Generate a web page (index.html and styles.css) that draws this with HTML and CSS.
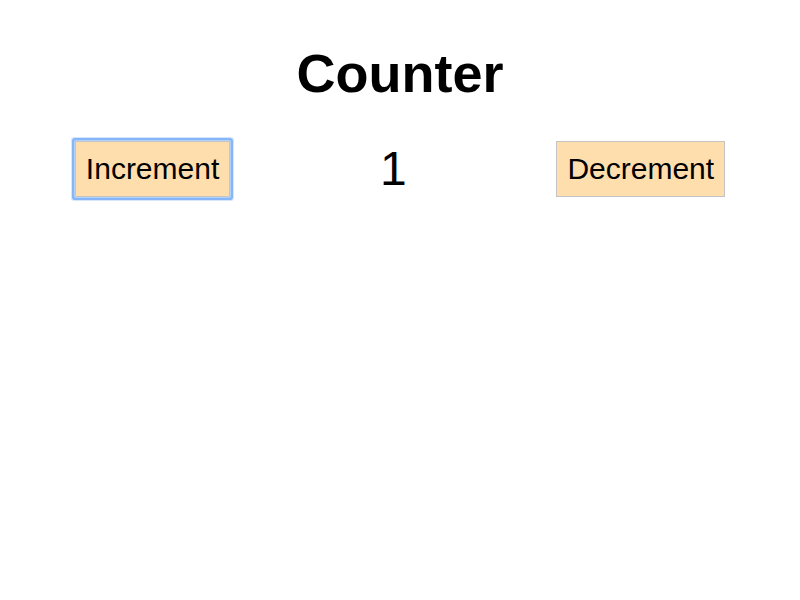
FILE: index.html
```html
<!DOCTYPE html>
<html>
<head>
<meta charset="utf-8">
<link rel="stylesheet" href="styles.css">
</head>
<body>
<div class="app">
  <h1 class="title">Counter</h1>
  <div class="row">
    <button class="btn focused">Increment</button>
    <span class="count">1</span>
    <button class="btn">Decrement</button>
  </div>
</div>
</body>
</html>
```
FILE: styles.css
```css
html, body {
  margin: 0;
  padding: 0;
  background: #ffffff;
}
body {
  font-family: "Liberation Sans", Arial, sans-serif;
  color: #000;
}
.app {
  width: 800px;
  height: 600px;
}
.title {
  margin: 0;
  padding-top: 42px;
  font-size: 54px;
  line-height: 62px;
  font-weight: bold;
  text-align: center;
}
.row {
  display: flex;
  justify-content: space-around;
  align-items: center;
  margin-top: 37px;
}
.btn {
  font-family: "Liberation Sans", Arial, sans-serif;
  font-size: 30px;
  line-height: 34px;
  padding: 10px 10px;
  background: #ffdead;
  border: 1px solid #c4c4c4;
  border-radius: 0;
  color: #000;
}
.btn.focused {
  box-shadow: 0 0 0 1px #b2d2fb, 0 0 0 3px #86b6f8, 0 0 0 4px rgba(134, 182, 248, 0.35);
  border-radius: 1px;
}
.count {
  font-size: 48px;
  line-height: 56px;
}
```
